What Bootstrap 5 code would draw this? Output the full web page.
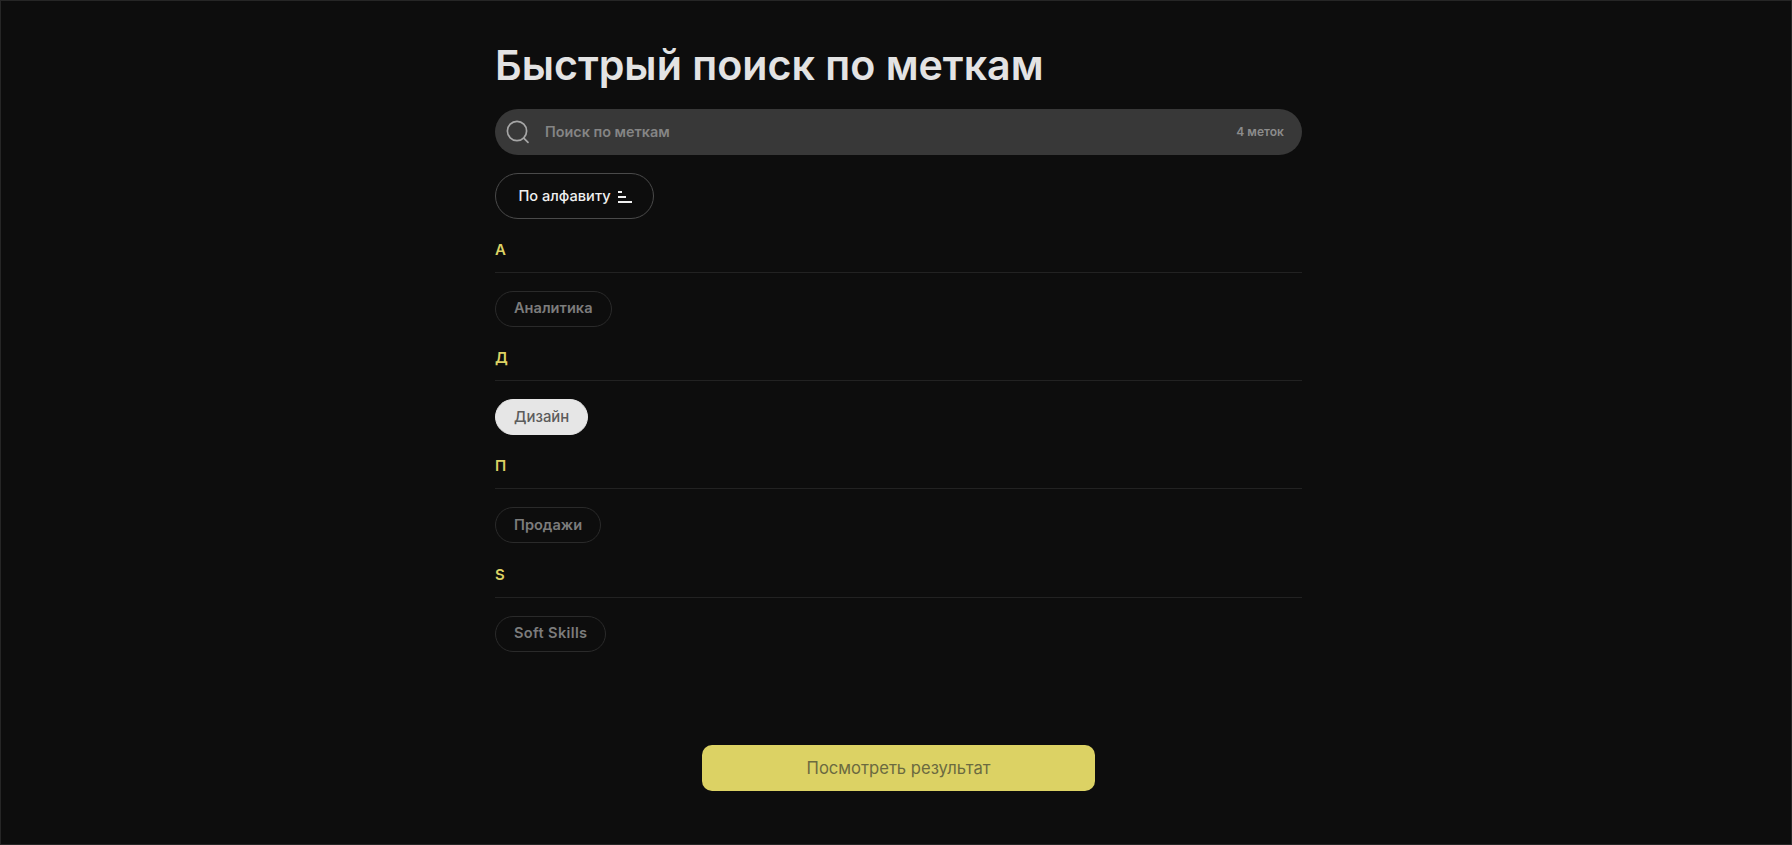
<!DOCTYPE html>
<html lang="ru">
<head>
<meta charset="utf-8">
<title>Быстрый поиск по меткам</title>
<link href="https://cdn.jsdelivr.net/npm/bootstrap@5.3.0/dist/css/bootstrap.min.css" rel="stylesheet">
<style>
html,body{height:100%}
body{background:#0d0d0d;font-family:Inter,"Noto Sans",sans-serif;overflow:hidden}
.frame{height:845px;border:1px solid #262626;padding-top:40px}
.column{width:807px;margin-left:494px}
.page-title{font-size:41.2px;line-height:48px;font-weight:600;color:#e3e3e3;margin:0 0 20px}
.search-bar{height:46px;background:#383838;border-radius:23px;padding:0 18px 0 10px;gap:14px}
.search-bar input{background:transparent;border:0;outline:0;flex:1;color:#e6e6e6;font-size:14.4px;font-weight:600;padding:0 0 1px}
.search-bar input::placeholder{color:#858585;opacity:1}
.count-text{font-size:12px;font-weight:600;color:#8c8c8c;letter-spacing:.05px}
.sort-btn{height:46px;width:159px;margin-top:18px;border:1px solid #4a4a4a;border-radius:23px;background:transparent;color:#f0f0f0;font-size:14.6px;font-weight:500;padding:1px 0 0 0;gap:7px}
.sort-btn:hover{color:#f0f0f0;border-color:#4a4a4a}
.sort-btn svg{margin-right:-1px}
.letter-head{color:#dcd264;font-size:15px;font-weight:600;line-height:22px;height:34px;border-bottom:1px solid #222;padding-top:0}
.letter-group{height:108.33px}
.letter-group:first-of-type{margin-top:19.8px}
.tag-chip{height:36px;border:1px solid #2a2a2a;border-radius:18px;background:transparent;color:#7c7c7c;font-size:14.6px;font-weight:600;padding:0 18px;margin-top:18px;display:inline-flex;align-items:center}
.tag-chip:hover{color:#7c7c7c;border-color:#2a2a2a}
.tag-chip.is-on{background:#e6e6e6;border-color:#e6e6e6;color:#5c5c5c;font-weight:500;font-size:14.9px}
.tag-chip.is-on:hover{color:#5c5c5c;border-color:#e6e6e6}
.tag-wide{letter-spacing:.35px}
.result-wrap{margin-top:73px}
.result-btn{width:393px;height:46px;background:#dcd264;border:0;border-radius:10px;color:#6b6a40;font-size:16.6px;font-weight:400;padding:0}
.result-btn:hover{background:#dcd264;color:#6b6a40}
</style>
</head>
<body>
<div class="frame">
  <div class="column">
    <h1 class="page-title">Быстрый поиск по меткам</h1>
    <div class="search-bar d-flex align-items-center">
      <svg width="26" height="26" viewBox="0 0 26 26" fill="none" stroke="#a6a6a6" stroke-width="1.7" stroke-linecap="round"><circle cx="12" cy="12" r="9.6"/><path d="M19 19.4l4 4"/></svg>
      <input type="text" placeholder="Поиск по меткам" aria-label="Поиск по меткам">
      <span class="count-text">4 меток</span>
    </div>
    <button type="button" class="btn sort-btn d-flex align-items-center justify-content-center">
      По алфавиту
      <svg width="14" height="12" viewBox="0 0 14 12" fill="#f0f0f0"><rect x="0" y="0" width="4" height="2"/><rect x="0" y="5" width="8" height="2"/><rect x="0" y="10" width="14" height="2"/></svg>
    </button>
    <section class="letter-group"><div class="letter-head">А</div><button type="button" class="btn tag-chip">Аналитика</button></section>
    <section class="letter-group"><div class="letter-head">Д</div><button type="button" class="btn tag-chip is-on">Дизайн</button></section>
    <section class="letter-group"><div class="letter-head">П</div><button type="button" class="btn tag-chip">Продажи</button></section>
    <section class="letter-group"><div class="letter-head">S</div><button type="button" class="btn tag-chip tag-wide">Soft Skills</button></section>
    <div class="result-wrap d-flex justify-content-center"><button type="button" class="btn result-btn">Посмотреть результат</button></div>
  </div>
</div>
<script src="https://cdn.jsdelivr.net/npm/bootstrap@5.3.0/dist/js/bootstrap.bundle.min.js"></script>
</body>
</html>
